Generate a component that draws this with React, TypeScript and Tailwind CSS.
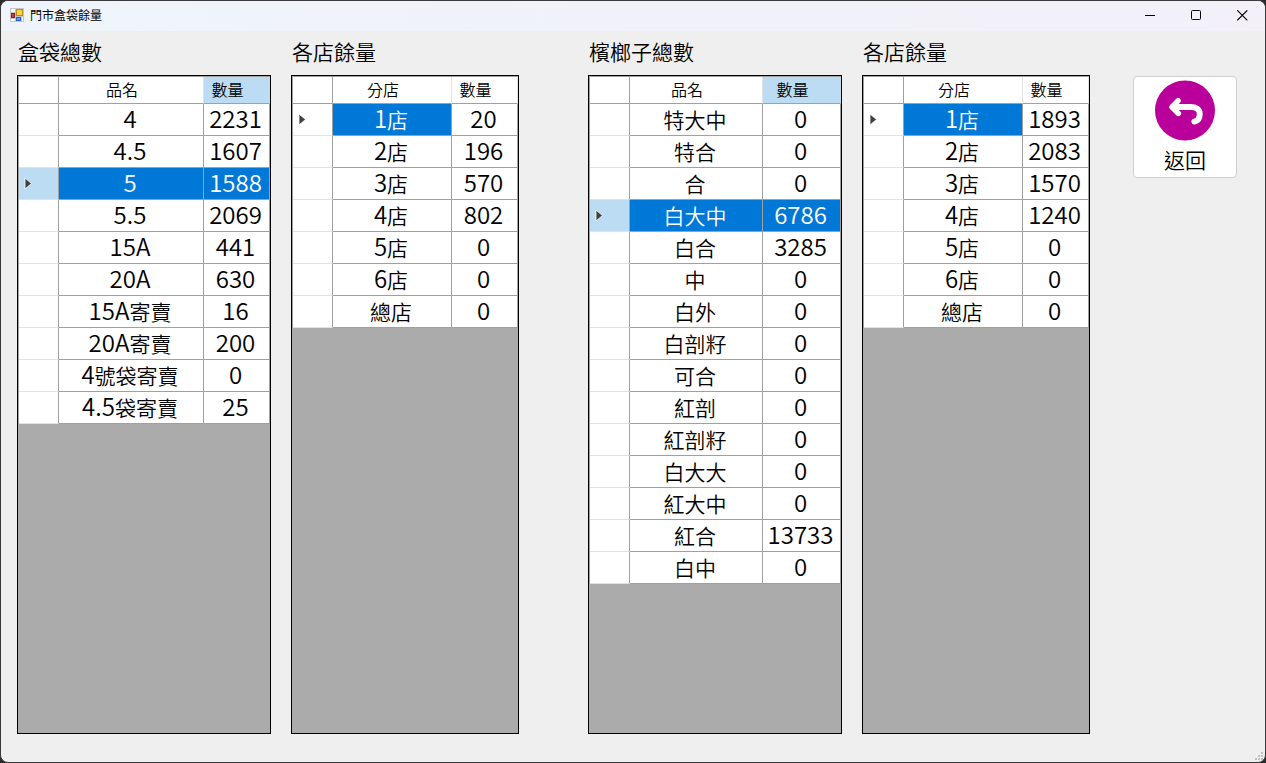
import { useState } from "react";

type Row = [name: string, qty: number];

type GridProps = {
  title: string;
  nameHeader: string;
  rows: Row[];
  initial: number;
  fullRow?: boolean;
  wideQty?: boolean;
};

const boxTotals: Row[] = [
  ["4", 2231],
  ["4.5", 1607],
  ["5", 1588],
  ["5.5", 2069],
  ["15A", 441],
  ["20A", 630],
  ["15A寄賣", 16],
  ["20A寄賣", 200],
  ["4號袋寄賣", 0],
  ["4.5袋寄賣", 25],
];

const boxStores: Row[] = [
  ["1店", 20],
  ["2店", 196],
  ["3店", 570],
  ["4店", 802],
  ["5店", 0],
  ["6店", 0],
  ["總店", 0],
];

const nutTotals: Row[] = [
  ["特大中", 0],
  ["特合", 0],
  ["合", 0],
  ["白大中", 6786],
  ["白合", 3285],
  ["中", 0],
  ["白外", 0],
  ["白剖籽", 0],
  ["可合", 0],
  ["紅剖", 0],
  ["紅剖籽", 0],
  ["白大大", 0],
  ["紅大中", 0],
  ["紅合", 13733],
  ["白中", 0],
];

const nutStores: Row[] = [
  ["1店", 1893],
  ["2店", 2083],
  ["3店", 1570],
  ["4店", 1240],
  ["5店", 0],
  ["6店", 0],
  ["總店", 0],
];

export default function App() {
  return (
    <div className="bg-[#2b2b2b] font-['Noto_Sans_CJK_TC',sans-serif] text-black">
      <div className="relative flex min-h-screen flex-col overflow-hidden rounded-lg border border-[#3a3a3c] bg-[#efefef]">
        <TitleBar />
        <main className="flex flex-1 pr-7 pb-7 pl-4">
          <GridPair>
            <DataGrid title="盒袋總數" nameHeader="品名" rows={boxTotals} initial={2} fullRow />
            <DataGrid title="各店餘量" nameHeader="分店" rows={boxStores} initial={0} />
          </GridPair>
          <div className="w-[69px]" />
          <GridPair>
            <DataGrid title="檳榔子總數" nameHeader="品名" rows={nutTotals} initial={3} fullRow wideQty />
            <DataGrid title="各店餘量" nameHeader="分店" rows={nutStores} initial={0} />
          </GridPair>
          <div className="pt-[45px] pl-[43px]">
            <BackButton />
          </div>
        </main>
        <ResizeGrip />
      </div>
    </div>
  );
}

function TitleBar() {
  return (
    <header className="flex h-[30px] items-center bg-linear-to-r from-[#eff4fb] to-[#f3f0f8] pb-0.5 pl-2">
      <AppIcon />
      <h1 className="ml-[5px] flex-1 text-xs">門市盒袋餘量</h1>
      <button aria-label="最小化" className="flex h-full w-[46px] items-center justify-center">
        <svg width="11" height="11" shapeRendering="crispEdges">
          <path d="M0 5.5h10" stroke="#000" />
        </svg>
      </button>
      <button aria-label="最大化" className="flex h-full w-[46px] items-center justify-center">
        <svg width="11" height="11" fill="none">
          <rect x="0.5" y="0.5" width="9" height="9" rx="1" stroke="#000" />
        </svg>
      </button>
      <button aria-label="關閉" className="flex h-full w-[46px] items-center justify-center">
        <svg width="11" height="11">
          <path d="M0.3 0.3l10 10M10.3 0.3l-10 10" stroke="#000" strokeWidth="1.1" />
        </svg>
      </button>
    </header>
  );
}

function GridPair({ children }: { children: React.ReactNode }) {
  return <div className="grid flex-1 grid-cols-[254fr_228fr] gap-5">{children}</div>;
}

function DataGrid({ title, nameHeader, rows, initial, fullRow, wideQty }: GridProps) {
  const [selected, setSelected] = useState(initial);

  return (
    <section className="flex flex-col">
      <h2 className="flex h-11 items-center pb-0.5 pl-px text-[21px] font-[350]">{title}</h2>
      <div className="flex-1 border border-black bg-[#ababab]">
        <table
          aria-label={title}
          className="w-full table-fixed border-separate border-spacing-0 border-t border-l border-[#a0a0a0]"
        >
          <thead>
            <tr className="h-[27px] text-base leading-5">
              <td className="w-10 border-r border-b border-[#a0a0a0] bg-white" />
              <th className="border-r border-b border-r-[#e3e3e3] border-b-[#a0a0a0] bg-white pr-[18px] pb-0.5 font-[350]">
                {nameHeader}
              </th>
              <th
                className={`${wideQty ? "w-[78px]" : "w-[66px]"} ${
                  fullRow ? "border-r-[#bcdcf4] bg-[#bcdcf4]" : "border-r-[#e3e3e3] bg-white"
                } border-r border-b border-b-[#a0a0a0] pr-[18px] pb-0.5 font-[350]`}
              >
                數量
              </th>
            </tr>
          </thead>
          <tbody>
            {rows.map(([name, qty], i) => {
              const active = i === selected;
              return (
                <tr key={name} onClick={() => setSelected(i)} className="h-8">
                  <td
                    className={`border-r border-b border-r-[#a0a0a0] border-b-[#e3e3e3] pl-[5px] ${
                      active && fullRow ? "bg-[#bcdcf4]" : "bg-white"
                    }`}
                  >
                    {active && <RowMarker />}
                  </td>
                  <Cell active={active}>{name}</Cell>
                  <Cell active={active && !!fullRow}>{String(qty)}</Cell>
                </tr>
              );
            })}
          </tbody>
        </table>
      </div>
    </section>
  );
}

function Cell({ active, children }: { active: boolean; children: string }) {
  // latin runs are set larger than the han characters
  const runs = children.match(/[\d.A-Z]+|[^\d.A-Z]+/g) ?? [];
  return (
    <td
      className={`border-r border-b border-[#a0a0a0] pr-0.5 text-center leading-7 font-[350] whitespace-nowrap ${
        active ? "bg-[#0078d7] text-white" : "bg-white"
      }`}
    >
      {runs.map((run, i) => (
        <span key={i} className={/^[\d.A-Z]/.test(run) ? "text-[24px] leading-7" : "text-[21px] leading-7"}>
          {run}
        </span>
      ))}
    </td>
  );
}

function RowMarker() {
  return (
    <svg width="8" height="13" className="block">
      <path d="M1 1v11l6.500-5.500z" fill="#404040" stroke="#fff" strokeWidth="0.8" />
    </svg>
  );
}

function BackButton() {
  return (
    <button className="flex h-[102px] w-[104px] flex-col items-center rounded border border-[#d0d0d0] bg-white pt-[3px]">
      <svg width="62" height="62" viewBox="0 0 62 62" fill="none">
        <circle cx="31" cy="31" r="30.5" fill="#b9009a" />
        <path
          d="M18.500 27.500H37.500C43 27.500 46 30.500 46 34.500C46 38.500 44 41.500 40.500 42.300"
          stroke="#fff"
          strokeWidth="6"
          strokeLinecap="round"
        />
        <path
          d="M24 21l-6.300 6.500L24.300 34"
          stroke="#fff"
          strokeWidth="5.5"
          strokeLinecap="round"
          strokeLinejoin="round"
        />
      </svg>
      <span className="text-[21px] leading-9 font-[350]">返回</span>
    </button>
  );
}

function AppIcon() {
  return (
    <svg width="16" height="16" viewBox="0 0 16 16">
      <rect x="1" y="1" width="14" height="14" fill="#c3c6ca" />
      <rect x="2" y="2" width="4" height="3" fill="#fff" />
      <rect x="2" y="12" width="4" height="2" fill="#fff" />
      <rect x="13" y="10" width="1" height="4" fill="#fff" />
      <rect x="7.500" y="2.500" width="6" height="6" fill="#fbd348" stroke="#c08a10" />
      <rect x="2.500" y="6.500" width="3" height="4" fill="#cf4436" stroke="#8f1d14" />
      <rect x="7.500" y="10.500" width="4" height="3" fill="#5c9bf0" stroke="#2f62bb" />
    </svg>
  );
}

function ResizeGrip() {
  const dots = [
    [6, 0],
    [3, 3],
    [6, 3],
    [0, 6],
    [3, 6],
    [6, 6],
  ];
  return (
    <svg width="8" height="8" className="absolute right-0.5 bottom-0.5">
      {dots.map(([x, y]) => (
        <rect key={`${x}-${y}`} x={x} y={y} width="2" height="2" fill="#bfbfbf" />
      ))}
    </svg>
  );
}
